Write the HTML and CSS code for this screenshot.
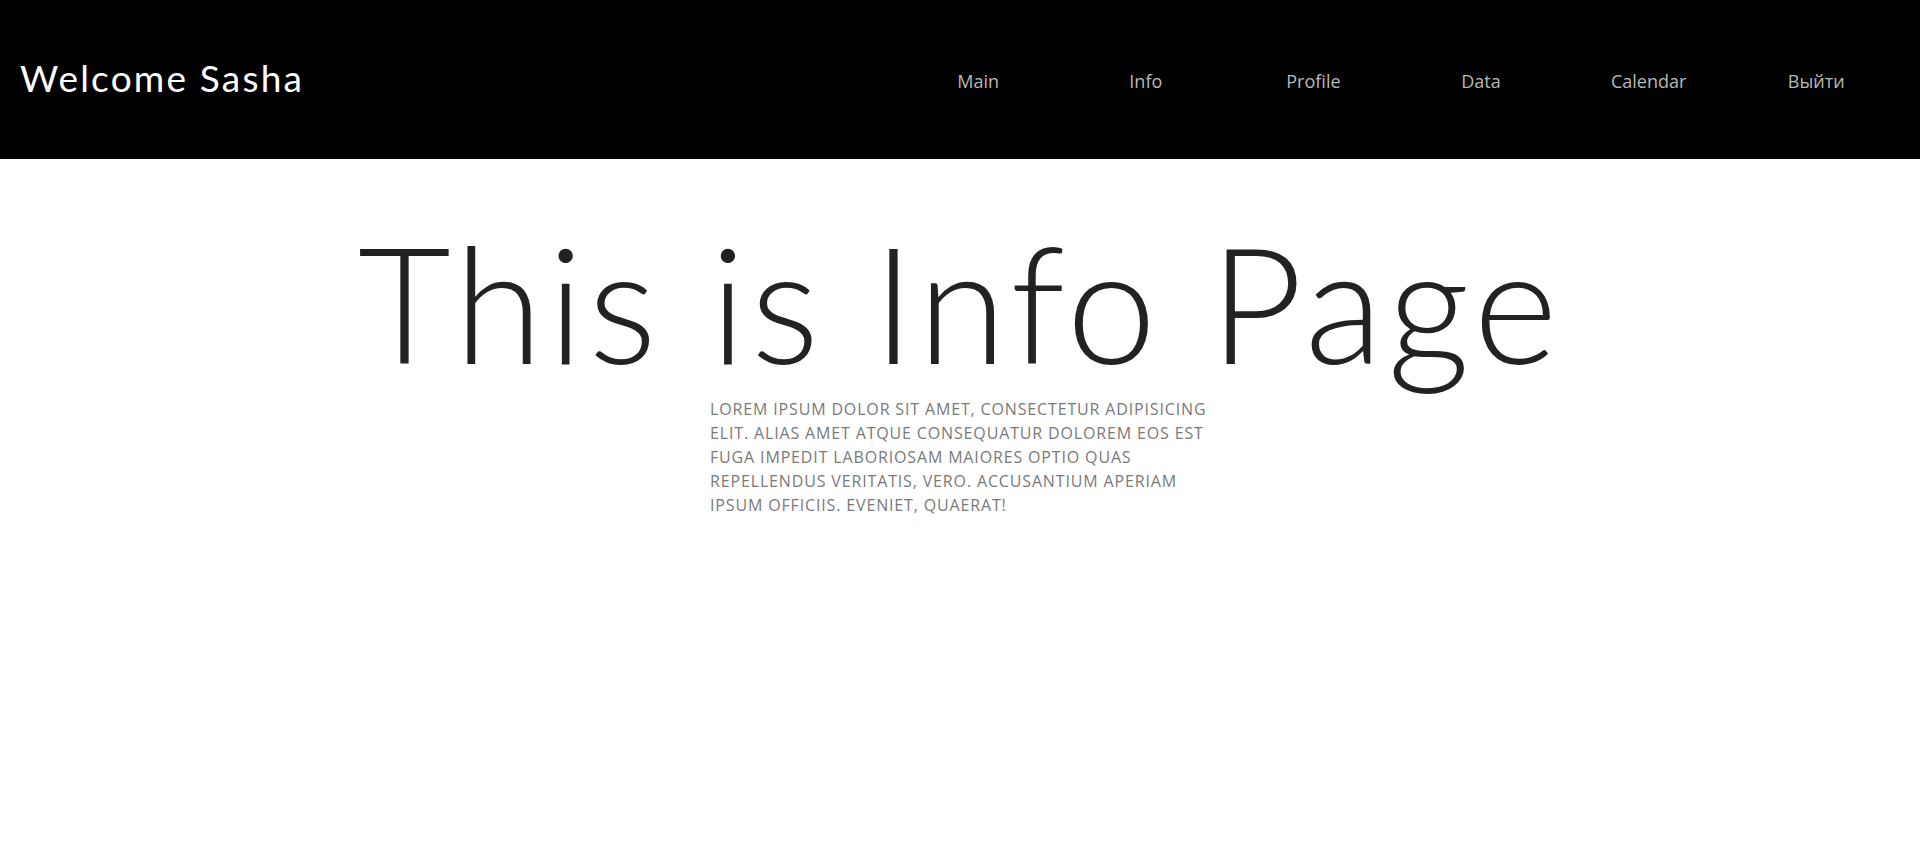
FILE: index.html
```html
<!DOCTYPE html>
<html lang="en">
<head>
<meta charset="utf-8">
<title>Info</title>
<link rel="stylesheet" href="styles.css">
</head>
<body>
<header class="topbar">
  <div class="brand">Welcome Sasha</div>
  <nav class="nav">
    <a class="nav-link" href="#">Main</a>
    <a class="nav-link" href="#">Info</a>
    <a class="nav-link" href="#">Profile</a>
    <a class="nav-link" href="#">Data</a>
    <a class="nav-link" href="#">Calendar</a>
    <a class="nav-link" href="#">Выйти</a>
  </nav>
</header>
<main class="content">
  <h1 class="title">This is Info Page</h1>
  <p class="lead">Lorem ipsum dolor sit amet, consectetur adipisicing elit. Alias amet atque consequatur dolorem eos est fuga impedit laboriosam maiores optio quas repellendus veritatis, vero. Accusantium aperiam ipsum officiis. Eveniet, quaerat!</p>
</main>
</body>
</html>
```

FILE: styles.css
```css
* { box-sizing: border-box; }
html, body { margin: 0; padding: 0; background: #fff; }
body { font-family: "Open Sans", "Liberation Sans", sans-serif; }

.topbar {
  height: 159px;
  background: #000;
  display: flex;
  align-items: center;
  justify-content: space-between;
  padding: 0 20px 0 20px;
}
.brand {
  font-family: Lato, "Open Sans", sans-serif;
  font-weight: 400;
  color: #fff;
  font-size: 37px;
  letter-spacing: 2.2px;
  margin-top: -4px;
}
.nav {
  display: flex;
  margin-top: 2px;
}
.nav-link {
  width: 167.6px;
  text-align: center;
  color: #b8b8b8;
  text-decoration: none;
  font-size: 18px;
}

.content {
  display: flex;
  flex-direction: column;
  align-items: center;
}
.title {
  font-family: Lato, "Open Sans", sans-serif;
  font-weight: 300;
  font-size: 161px;
  letter-spacing: 4.8px;
  line-height: 1;
  color: #222;
  margin: 62px 0 0 0;
}
.lead {
  width: 500px;
  margin: 15px 0 0 0;
  text-transform: uppercase;
  color: #7a7a7a;
  font-size: 16px;
  letter-spacing: 0.85px;
  line-height: 24px;
}
```
